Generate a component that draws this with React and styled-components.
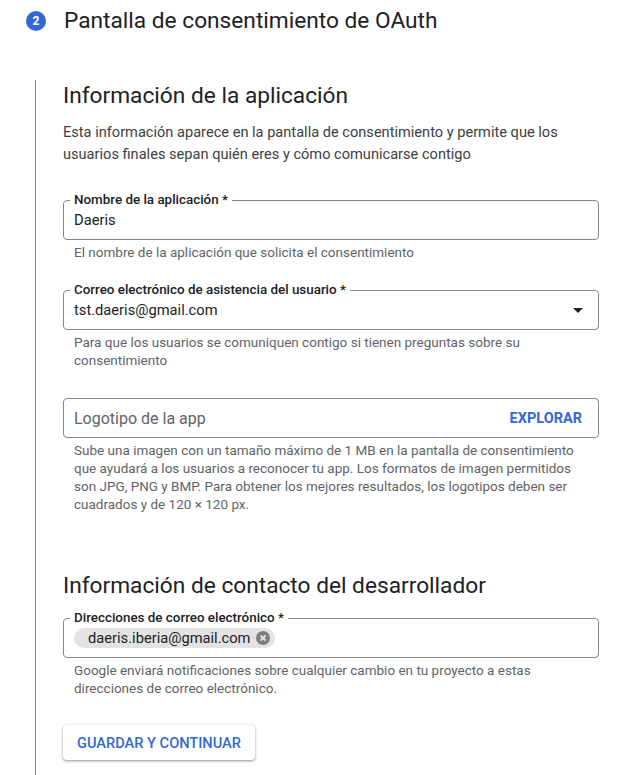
import React from 'react';
import styled, {createGlobalStyle} from 'styled-components';

const GlobalStyle = createGlobalStyle`
    body {
        margin: 0;
        background: #fff;
        font-family: Roboto, "Liberation Sans", Arial, sans-serif;
        color: #202124;
    }
`;

const Page = styled.div`
    width: 642px;
    padding-top: 7px;
    box-sizing: border-box;
`;

// 단계 헤더 (번호 + 제목)
const StepHeader = styled.div`
    display: flex;
    align-items: center;
    height: 28px;
`;

const StepBadge = styled.div`
    width: 20px;
    height: 20px;
    margin-left: 26px;
    border-radius: 50%;
    background: #3367d6;
    color: #fff;
    font-size: 12px;
    font-weight: 700;
    display: flex;
    align-items: center;
    justify-content: center;
`;

const StepTitle = styled.h1`
    margin: 0 0 0 18px;
    font-size: 22.7px;
    line-height: 28px;
    font-weight: 400;
    color: #202124;
`;

const StepBody = styled.div`
    margin-top: 45px;
    margin-left: 35px;
    border-left: 1px solid #80868b;
    padding: 2px 0 30px 27px;
    width: 536px;
`;

const SectionTitle = styled.h2`
    margin: ${({top}) => top || 0}px 0 0;
    font-size: 22.7px;
    line-height: 28px;
    font-weight: 400;
    color: #202124;
`;

const Description = styled.p`
    margin: 11px 0 0;
    font-size: 14.6px;
    line-height: 22px;
    color: #3c4043;
`;

const Field = styled.div`
    margin-top: ${({top}) => top}px;
`;

const Box = styled.div`
    position: relative;
    height: 40px;
    box-sizing: border-box;
    border: 1px solid #80868b;
    border-radius: 4px;
    display: flex;
    align-items: center;
    padding: 0 8px 0 10px;
`;

const FloatLabel = styled.span`
    position: absolute;
    top: -9px;
    left: 6px;
    padding: 0 4px;
    background: #fff;
    font-size: 13.4px;
    line-height: 16px;
    font-weight: 500;
    color: #202124;
`;

const Value = styled.span`
    flex: 1;
    font-size: ${({placeholder}) => (placeholder ? '16px' : '14.7px')};
    color: ${({placeholder}) => (placeholder ? '#5f6368' : '#202124')};
`;

const ArrowIcon = styled.svg`
    width: 24px;
    height: 24px;
    fill: #202124;
`;

const TextButton = styled.span`
    font-size: 14.5px;
    font-weight: 700;
    color: #3367d6;
    padding-right: 8px;
`;

const Hint = styled.div`
    margin-top: 3px;
    padding-left: 11px;
    font-size: 13.5px;
    line-height: 18px;
    color: #5f6368;
`;

const Chip = styled.div`
    display: flex;
    align-items: center;
    gap: 6px;
    height: 20px;
    padding: 0 5px 0 14px;
    border-radius: 10px;
    background: #e3e3e3;
    font-size: 14.7px;
    color: #202124;
`;

const ChipClose = styled.svg`
    width: 14px;
    height: 14px;
`;

const SaveButton = styled.button`
    margin-top: 28px;
    height: 35px;
    padding: 0 14px;
    border: none;
    border-radius: 4px;
    background: #fff;
    box-shadow: 0 1px 2px rgba(60, 64, 67, 0.4), 0 1px 3px 1px rgba(60, 64, 67, 0.15);
    font-family: inherit;
    font-size: 14.6px;
    font-weight: 500;
    color: #3367d6;
`;

export default function App() {
    return (
        <Page>
            <GlobalStyle/>
            <StepHeader>
                <StepBadge>2</StepBadge>
                <StepTitle>Pantalla de consentimiento de OAuth</StepTitle>
            </StepHeader>
            <StepBody>
                <SectionTitle>Información de la aplicación</SectionTitle>
                <Description>
                    Esta información aparece en la pantalla de consentimiento y permite que los
                    <br/>usuarios finales sepan quién eres y cómo comunicarse contigo
                </Description>

                <Field top={35}>
                    <Box>
                        <FloatLabel>Nombre de la aplicación *</FloatLabel>
                        <Value>Daeris</Value>
                    </Box>
                    <Hint>El nombre de la aplicación que solicita el consentimiento</Hint>
                </Field>

                <Field top={29}>
                    <Box>
                        <FloatLabel>Correo electrónico de asistencia del usuario *</FloatLabel>
                        <Value>tst.daeris@gmail.com</Value>
                        <ArrowIcon viewBox="0 0 24 24"><path d="M7 10l5 5 5-5z"/></ArrowIcon>
                    </Box>
                    <Hint>
                        Para que los usuarios se comuniquen contigo si tienen preguntas sobre su
                        <br/>consentimiento
                    </Hint>
                </Field>

                <Field top={29}>
                    <Box>
                        <Value placeholder="1">Logotipo de la app</Value>
                        <TextButton>EXPLORAR</TextButton>
                    </Box>
                    <Hint>
                        Sube una imagen con un tamaño máximo de 1 MB en la pantalla de consentimiento
                        <br/>que ayudará a los usuarios a reconocer tu app. Los formatos de imagen permitidos
                        <br/>son JPG, PNG y BMP. Para obtener los mejores resultados, los logotipos deben ser
                        <br/>cuadrados y de 120 × 120 px.
                    </Hint>
                </Field>

                <SectionTitle top={59}>Información de contacto del desarrollador</SectionTitle>

                <Field top={18}>
                    <Box>
                        <FloatLabel>Direcciones de correo electrónico *</FloatLabel>
                        <Chip>
                            daeris.iberia@gmail.com
                            <ChipClose viewBox="0 0 14 14">
                                <circle cx="7" cy="7" r="7" fill="#7d7d7d"/>
                                <path d="M4.5 4.5l5 5M9.5 4.5l-5 5" stroke="#e3e3e3" strokeWidth="1.8"/>
                            </ChipClose>
                        </Chip>
                    </Box>
                    <Hint>
                        Google enviará notificaciones sobre cualquier cambio en tu proyecto a estas
                        <br/>direcciones de correo electrónico.
                    </Hint>
                </Field>

                <SaveButton>GUARDAR Y CONTINUAR</SaveButton>
            </StepBody>
        </Page>
    );
}
